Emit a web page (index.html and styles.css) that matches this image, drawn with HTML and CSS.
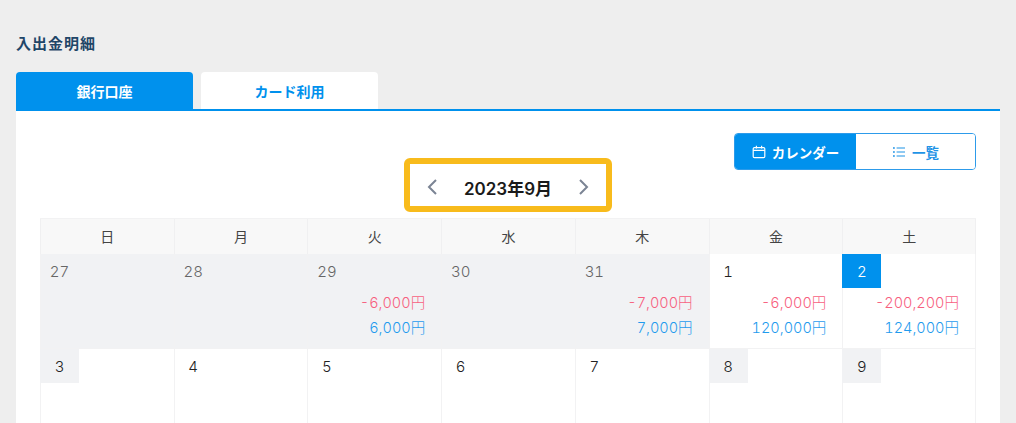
FILE: index.html
```html
<!DOCTYPE html>
<html lang="ja">
<head>
<meta charset="utf-8">
<title>入出金明細</title>
<link rel="stylesheet" href="styles.css">
</head>
<body>
<main class="page">
  <h1 class="title">入出金明細</h1>
  <div class="tabs">
    <button class="tab tab-active">銀行口座</button>
    <button class="tab">カード利用</button>
  </div>
  <section class="panel">
    <div class="toolbar">
      <div class="toggle">
        <button class="toggle-btn toggle-on">
          <svg class="icon" viewBox="0 0 14 14" fill="none" stroke="currentColor" stroke-width="1.2"><rect x="1.2" y="2.6" width="11.600" height="10" rx="1.2"/><path d="M1.2 5.4h11.600M4.400 0.800v2.600M9.600 0.800v2.600"/></svg>
          <span>カレンダー</span>
        </button>
        <button class="toggle-btn">
          <svg class="icon" viewBox="0 0 14 14" fill="none" stroke="currentColor" stroke-width="1.1"><path d="M4.600 3h8.400M4.600 7h8.400M4.600 11h8.400"/><path d="M1 3h1.800M1 7h1.800M1 11h1.800" stroke-width="1.500"/></svg>
          <span>一覧</span>
        </button>
      </div>
    </div>
    <div class="month-wrap">
      <div class="month-nav">
        <svg class="chev" viewBox="0 0 12 16" fill="none" stroke="currentColor" stroke-width="2"><path d="M10 1L3 8l7 7"/></svg>
        <span class="month">2023年9月</span>
        <svg class="chev" viewBox="0 0 12 16" fill="none" stroke="currentColor" stroke-width="2"><path d="M2 1l7 7-7 7"/></svg>
      </div>
      <div class="highlight"></div>
    </div>
    <div class="calendar">
      <div class="head">日</div><div class="head">月</div><div class="head">火</div><div class="head">水</div><div class="head">木</div><div class="head">金</div><div class="head">土</div>

      <div class="cell out"><span class="day">27</span></div>
      <div class="cell out"><span class="day">28</span></div>
      <div class="cell out"><span class="day">29</span><p class="minus">-6,000円</p><p class="plus">6,000円</p></div>
      <div class="cell out"><span class="day">30</span></div>
      <div class="cell out"><span class="day">31</span><p class="minus">-7,000円</p><p class="plus">7,000円</p></div>
      <div class="cell"><span class="day">1</span><p class="minus">-6,000円</p><p class="plus">120,000円</p></div>
      <div class="cell"><span class="day today">2</span><p class="minus">-200,200円</p><p class="plus">124,000円</p></div>

      <div class="cell"><span class="day holiday">3</span></div>
      <div class="cell"><span class="day">4</span></div>
      <div class="cell"><span class="day">5</span></div>
      <div class="cell"><span class="day">6</span></div>
      <div class="cell"><span class="day">7</span></div>
      <div class="cell"><span class="day holiday">8</span></div>
      <div class="cell"><span class="day holiday">9</span></div>
    </div>
  </section>
</main>
</body>
</html>
```
FILE: styles.css
```css
* { box-sizing: border-box; }
html, body { margin: 0; height: 423px; overflow: hidden; }
body {
  background: #eeeeee;
  font-family: Inter, "Noto Sans CJK JP", sans-serif;
  color: #333;
}
.page { padding: 35px 16px 0; }
.title {
  margin: 0 0 19px;
  font-size: 15px;
  line-height: 18px;
  letter-spacing: 1px;
  font-weight: 700;
  color: #1f4668;
}
.tabs { display: flex; gap: 8px; height: 39px; border-bottom: 2px solid #0091ed; }
.tab {
  width: 177px;
  height: 37px;
  border: 0;
  padding: 0;
  border-radius: 4px 4px 0 0;
  background: #fff;
  color: #0091ed;
  font: 700 14px Inter, "Noto Sans CJK JP", sans-serif;
}
.tab-active { background: #0091ed; color: #fff; }
.panel { background: #fff; padding: 22px 24px 0; height: 313px; }
.toolbar { display: flex; justify-content: flex-end; }
.toggle {
  display: flex;
  width: 242px;
  height: 37px;
  border: 1px solid #2d9bea;
  border-radius: 4px;
  overflow: hidden;
}
.toggle-btn {
  flex: 1;
  display: flex;
  align-items: center;
  justify-content: center;
  gap: 6px;
  border: 0;
  padding: 0;
  background: #fff;
  color: #1f93e6;
  font: 700 13.5px Inter, "Noto Sans CJK JP", sans-serif;
}
.toggle-on { flex: 0 0 121px; background: #0091ed; color: #fff; }
.icon { width: 14px; height: 14px; }
.month-wrap { display: flex; justify-content: center; height: 48px; position: relative; }
.month-nav { display: flex; align-items: center; gap: 26px; height: 34px; }
.month { font-size: 17px; font-weight: 600; color: #1a1a1a; }
.chev { width: 12px; height: 16px; color: #7b8494; }
.highlight {
  position: absolute;
  left: 364px;
  top: -12px;
  width: 208px;
  height: 54px;
  border: 6px solid #f8bb1c;
  border-radius: 6px;
}
.calendar {
  display: grid;
  grid-template-columns: repeat(7, 1fr);
  border-top: 1px solid #f2f2f3;
}
.head {
  height: 35px;
  padding-bottom: 2px;
  display: flex;
  align-items: center;
  justify-content: center;
  background: #f8f8f8;
  border-left: 1px solid #f0f0f1;
  font-size: 14px;
  color: #444;
}
.head:nth-child(7) { border-right: 1px solid #f0f0f1; }
.cell {
  height: 95px;
  border-left: 1px solid #f2f2f3;
  border-bottom: 1px solid #f2f2f3;
  font-size: 15px;
  font-weight: 300;
  font-variant-numeric: tabular-nums;
  color: #222;
}
.cell:nth-child(7n) { border-right: 1px solid #f2f2f3; }
.cell.out { background: #f1f2f4; color: #666; }
.day {
  display: block;
  width: 39px;
  height: 34px;
  margin-left: -1px;
  padding-top: 1px;
  line-height: 33px;
  text-align: center;
}
.holiday { background: #f1f2f4; }
.today { background: #0091ed; color: #fff; }
.minus, .plus { margin: 0; padding-right: 16px; text-align: right; font-size: 14.5px; line-height: 25px; }
.minus { color: #f7607e; margin-top: 2px; }
.plus { color: #1f9bee; }
```
